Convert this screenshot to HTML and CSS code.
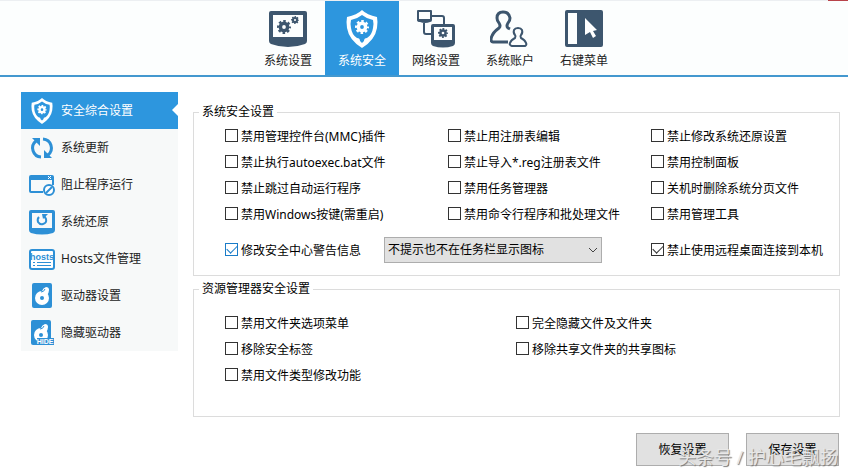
FILE: index.html
```html
<!DOCTYPE html>
<html lang="zh-CN">
<head>
  <meta charset="UTF-8" />
  <meta name="viewport" content="width=device-width, initial-scale=1" />
  <title>系统安全</title>
  <link rel="stylesheet" href="styles.css">
</head>
<body>
  <!-- shared shapes -->
  <svg class="defs" aria-hidden="true">
    <symbol id="gear" viewBox="-10 -10 20 20">
      <circle r="5.2" fill="none" stroke="currentColor" stroke-width="5"/>
      <circle r="8" fill="none" stroke="currentColor" stroke-width="4" pathLength="16" stroke-dasharray="1.1 .9" stroke-dashoffset=".55"/>
    </symbol>
    <symbol id="shield" viewBox="0 0 32 38">
      <path fill="currentColor" fill-rule="evenodd" d="M16 0Q21 5 31 7Q32 12 31 18Q29 30 16 38Q3 30 1 18Q0 12 1 7Q11 5 16 0Z M16 5Q11 9 5 10Q4 14 5 18Q6 25 11 28Q14 28 14 31L16 33L18 31Q18 28 21 28Q26 25 27 18Q28 14 27 10Q21 9 16 5Z"/>
      <use href="#gear" x="9" y="10" width="14" height="14"/>
    </symbol>
    <symbol id="disk" viewBox="0 0 20 25">
      <rect width="20" height="25" rx="2" fill="currentColor"/>
      <circle cx="10" cy="15" r="7" fill="#fff"/>
      <path d="M10 8Q11 5 14 4Q17 4 17 7Q17 10 15 12Z" fill="#fff"/>
      <path d="M9 9Q12 9 13 6" fill="none" stroke="currentColor"/>
      <circle cx="10" cy="15" r="2" fill="currentColor"/>
    </symbol>
  </svg>

  <header class="top-bar">
    <nav class="top-nav">
      <a href="#settings" class="top-item">
        <svg class="top-icon" viewBox="0 0 40 38">
          <path fill="currentColor" fill-rule="evenodd" d="M3 1H37Q39 1 39 3V31Q39 33 37 34Q29 37 20 37T3 34Q1 33 1 31V3Q1 1 3 1Z M5 5V27H35V5Z"/>
          <use href="#gear" x="9" y="10" width="14" height="14"/>
          <use href="#gear" x="23" y="6" width="8" height="8"/>
        </svg>
        系统设置
      </a>
      <a href="#security" class="top-item active">
        <svg class="top-icon" viewBox="0 0 40 38"><use href="#shield" x="4" y="0" width="32" height="38"/></svg>
        系统安全
      </a>
      <a href="#network" class="top-item">
        <svg class="top-icon" viewBox="0 0 40 38">
          <path fill="currentColor" fill-rule="evenodd" d="M2 0H15Q16 0 16 1V10Q16 12 14 12Q9 14 4 12Q1 12 1 10V1Q1 0 2 0Z M3 2V9H14V2Z"/>
          <path fill="none" stroke="currentColor" stroke-width="2" d="M16 6H26Q28 6 28 8V14 M8 13V22Q8 24 10 24H15"/>
          <path fill="currentColor" fill-rule="evenodd" d="M17 14H37Q39 14 39 16V33Q39 35 37 36Q27 39 17 36Q15 35 15 33V16Q15 14 17 14Z M18 17V30H36V17Z"/>
          <use href="#gear" x="22" y="18" width="10" height="10"/>
        </svg>
        网络设置
      </a>
      <a href="#accounts" class="top-item">
        <svg class="top-icon" viewBox="0 0 40 38" fill="none" stroke="currentColor" stroke-width="3" stroke-linejoin="round">
          <path d="M18 32H3Q1 32 1 29Q2 23 9 18Q11 16 9 13Q7 11 7 8Q7 2 13 2T20 8Q20 11 18 13Q16 16 18 18L20 19"/>
          <path stroke-width="2" d="M22 36H35Q37 35 36 33Q35 30 31 28Q30 26 31 25Q33 23 32 20Q31 18 28 18T24 20Q23 23 25 25Q26 26 25 28Q21 30 20 33Q19 35 22 36Z"/>
        </svg>
        系统账户
      </a>
      <a href="#context-menu" class="top-item">
        <svg class="top-icon" viewBox="0 0 40 38">
          <path fill="currentColor" fill-rule="evenodd" d="M3 0H37Q39 0 39 2V35Q39 37 37 37H3Q1 37 1 35V2Q1 0 3 0Z M4 3V34H13V3Z"/>
          <path fill="#fff" d="M21 8L33 20L29 21L32 26L29 28L26 22L21 25Z"/>
        </svg>
        右键菜单
      </a>
    </nav>
    <span class="corner-mark"></span>
  </header>

  <div class="page">
    <nav class="sidebar">
      <a href="#overall" class="side-item active">
        <svg class="side-icon" viewBox="0 0 26 26"><use href="#shield" x="2" y="0" width="22" height="26"/></svg>
        安全综合设置
      </a>
      <a href="#update" class="side-item">
        <svg class="side-icon" viewBox="0 0 26 26" fill="none" stroke="currentColor" stroke-width="3">
          <path d="M12 22A9 9 0 0 1 7 6 M14 4A9 9 0 0 1 19 20"/>
          <path fill="currentColor" stroke="none" d="M3 3L11 3L11 11Z M23 23L15 23L15 15Z"/>
        </svg>
        系统更新
      </a>
      <a href="#block" class="side-item">
        <svg class="side-icon" viewBox="0 0 26 26">
          <path fill="currentColor" fill-rule="evenodd" d="M2 3H23Q25 3 25 5V13H23V8H2V19H14V21H2Q0 21 0 19V5Q0 3 2 3Z"/>
          <path stroke="#fff" d="M19 4L22 7M22 4L19 7"/>
          <circle cx="20" cy="18" r="5" fill="#fff" stroke="currentColor" stroke-width="2"/>
          <path stroke="currentColor" stroke-width="2" d="M17 21L23 15"/>
        </svg>
        阻止程序运行
      </a>
      <a href="#restore" class="side-item">
        <svg class="side-icon" viewBox="0 0 26 26">
          <path fill="currentColor" fill-rule="evenodd" d="M2 1H24Q26 1 26 3V21Q26 23 24 24Q13 27 2 24Q0 23 0 21V3Q0 1 2 1Z M3 4V19H23V4Z"/>
          <path fill="none" stroke="currentColor" stroke-width="2" d="M10 8Q8 10 9 13Q11 16 14 15Q18 14 17 10Q16 8 15 7"/>
          <path fill="currentColor" d="M13 5H19L14 10Z"/>
        </svg>
        系统还原
      </a>
      <a href="#hosts" class="side-item">
        <svg class="side-icon" viewBox="0 0 26 26">
          <rect x="1" y="4" width="24" height="19" rx="2" fill="#fff" stroke="currentColor" stroke-width="2"/>
          <text x="13" y="14" class="hosts-text" text-anchor="middle">hosts</text>
          <path stroke="currentColor" stroke-dasharray="2 1" d="M4 16.500H7M4 19.500H7"/>
          <path stroke="currentColor" d="M8 16.500H22M8 19.500H22"/>
        </svg>
        Hosts文件管理
      </a>
      <a href="#drive" class="side-item">
        <svg class="side-icon" viewBox="0 0 26 26"><use href="#disk" x="3" y="0" width="20" height="25"/></svg>
        驱动器设置
      </a>
      <a href="#hide-drive" class="side-item">
        <svg class="side-icon" viewBox="0 0 26 26">
          <use href="#disk" x="2" y="0" width="20" height="25"/>
          <rect x="8" y="18" width="17" height="7" fill="currentColor"/>
          <text x="16" y="24" class="hide-text" text-anchor="middle">HIDE</text>
        </svg>
        隐藏驱动器
      </a>
    </nav>

    <main class="content">
      <fieldset class="group">
        <legend>系统安全设置</legend>
        <div class="options three">
          <label class="check"><input type="checkbox">禁用管理控件台(MMC)插件</label>
          <label class="check"><input type="checkbox">禁止用注册表编辑</label>
          <label class="check"><input type="checkbox">禁止修改系统还原设置</label>
          <label class="check"><input type="checkbox">禁止执行autoexec.bat文件</label>
          <label class="check"><input type="checkbox">禁止导入*.reg注册表文件</label>
          <label class="check"><input type="checkbox">禁用控制面板</label>
          <label class="check"><input type="checkbox">禁止跳过自动运行程序</label>
          <label class="check"><input type="checkbox">禁用任务管理器</label>
          <label class="check"><input type="checkbox">关机时删除系统分页文件</label>
          <label class="check"><input type="checkbox">禁用Windows按键(需重启)</label>
          <label class="check"><input type="checkbox">禁用命令行程序和批处理文件</label>
          <label class="check"><input type="checkbox">禁用管理工具</label>
        </div>
        <div class="options three alert-row">
          <div class="alert-setting">
            <label class="check hot"><input type="checkbox" checked>修改安全中心警告信息</label>
            <div class="select-box">
              <select aria-label="警告信息">
                <option>不提示也不在任务栏显示图标</option>
              </select>
              <svg class="chevron" viewBox="0 0 10 6"><path fill="none" stroke="#444" d="M1 1L5 5L9 1"/></svg>
            </div>
          </div>
          <label class="check"><input type="checkbox" checked>禁止使用远程桌面连接到本机</label>
        </div>
      </fieldset>

      <fieldset class="group explorer">
        <legend>资源管理器安全设置</legend>
        <div class="options two">
          <label class="check"><input type="checkbox">禁用文件夹选项菜单</label>
          <label class="check"><input type="checkbox">完全隐藏文件及文件夹</label>
          <label class="check"><input type="checkbox">移除安全标签</label>
          <label class="check"><input type="checkbox">移除共享文件夹的共享图标</label>
          <label class="check"><input type="checkbox">禁用文件类型修改功能</label>
        </div>
      </fieldset>

      <div class="actions">
        <button type="button">恢复设置</button>
        <button type="button">保存设置</button>
        <span class="watermark">头条号 / 护心毛飘扬</span>
      </div>
    </main>
  </div>
</body>
</html>
```

FILE: styles.css
```css
* {
  box-sizing: border-box;
}

body {
  margin: 0;
  background: #fff;
  color: #000;
  font: 12px/18px "Noto Sans", "Noto Sans CJK SC", sans-serif;
}

a {
  color: inherit;
  text-decoration: none;
}

.defs {
  position: absolute;
  width: 0;
  height: 0;
}

/* top bar */
.top-bar {
  position: relative;
  background: #fcfefe;
  border-top: 1px solid #eceff2;
  border-bottom: 2px solid #4398cf;
}

.top-nav {
  display: flex;
  justify-content: center;
  padding-left: 24px;
}

.top-item {
  display: flex;
  flex-direction: column;
  align-items: center;
  gap: 4px;
  width: 74px;
  padding: 9px 0 5px;
  color: #222;
}

.top-icon {
  width: 40px;
  height: 38px;
  color: #3d566e;
}

.top-item.active {
  background: #2d96de;
  color: #fff;
}

.top-item.active .top-icon {
  color: #fff;
}

.corner-mark {
  position: absolute;
  top: -1px;
  right: 0;
  width: 20px;
  height: 1px;
  background: #b8434a;
}

/* layout */
.page {
  display: flex;
  align-items: flex-start;
  gap: 15px;
  padding: 15px 8px 7px 21px;
}

.sidebar {
  flex: none;
  width: 157px;
  background: #f7f9f9;
}

.side-item {
  position: relative;
  display: flex;
  align-items: center;
  gap: 6px;
  height: 37px;
  padding-left: 8px;
  color: #222;
}

.side-icon {
  width: 26px;
  height: 26px;
  color: #2d90d6;
}

.side-item.active {
  background: #2d96de;
  color: #fff;
}

.side-item.active .side-icon {
  color: #fff;
}

.side-item.active::after {
  content: "";
  position: absolute;
  right: 0;
  top: 12px;
  border: 6px solid transparent;
  border-left: 0;
  border-right-color: #fff;
}

.hosts-text {
  fill: #2d90d6;
  font: bold 9px "Liberation Sans", sans-serif;
}

.hide-text {
  fill: #fff;
  font: bold 7px "Liberation Sans", sans-serif;
}

/* option groups */
.content {
  flex: 1;
  padding-top: 11px;
}

.group {
  min-width: 0;
  margin: 0;
  padding: 2px 0 12px 31px;
  border: 1px solid #dcdcdc;
}

.group legend {
  margin-left: -26px;
  padding: 0 3px;
}

.options {
  display: grid;
}

.three {
  grid-template-columns: 223fr 203fr 188fr;
}

.two {
  grid-template-columns: 291fr 323fr;
}

.check {
  display: flex;
  align-items: center;
  gap: 3px;
  height: 26px;
  padding-top: 2px;
  white-space: nowrap;
}

.check input {
  appearance: none;
  flex: none;
  width: 13px;
  height: 13px;
  margin: 0 0 4px;
  border: 1px solid #333;
  background: #fff;
}

.check input:checked::before {
  content: "";
  display: block;
  width: 9px;
  height: 5px;
  margin: 2px 1px;
  border: solid #333;
  border-width: 0 0 1px 1px;
  transform: translateY(-1px) rotate(-45deg);
}

.check.hot input,
.check.hot input:checked::before {
  border-color: #1a7cc8;
}

.alert-row {
  margin-top: 10px;
}

.alert-setting {
  grid-column: span 2;
  display: flex;
  align-items: center;
  gap: 23px;
}

.select-box {
  position: relative;
  width: 218px;
}

.select-box select {
  appearance: none;
  display: block;
  width: 100%;
  height: 26px;
  padding: 0 20px 0 3px;
  border: 1px solid #adadad;
  border-radius: 0;
  background: #e1e1e1;
  color: #000;
  font: inherit;
}

.chevron {
  position: absolute;
  right: 4px;
  top: 10px;
  width: 10px;
  height: 6px;
  pointer-events: none;
}

.explorer {
  margin-top: 4px;
  padding: 12px 0 28px 31px;
}

/* buttons */
.actions {
  position: relative;
  display: flex;
  justify-content: flex-end;
  gap: 17px;
  margin-top: 16px;
  padding-right: 1px;
}

.actions button {
  width: 93px;
  height: 33px;
  padding: 0;
  border: 1px solid #adadad;
  background: #e1e1e1;
  color: #000;
  font: inherit;
}

.watermark {
  position: absolute;
  right: 2px;
  bottom: -4px;
  color: #e8e8e8;
  font-size: 18px;
  line-height: 26px;
  text-shadow: 1px 1px 1px #777;
  pointer-events: none;
}
```
